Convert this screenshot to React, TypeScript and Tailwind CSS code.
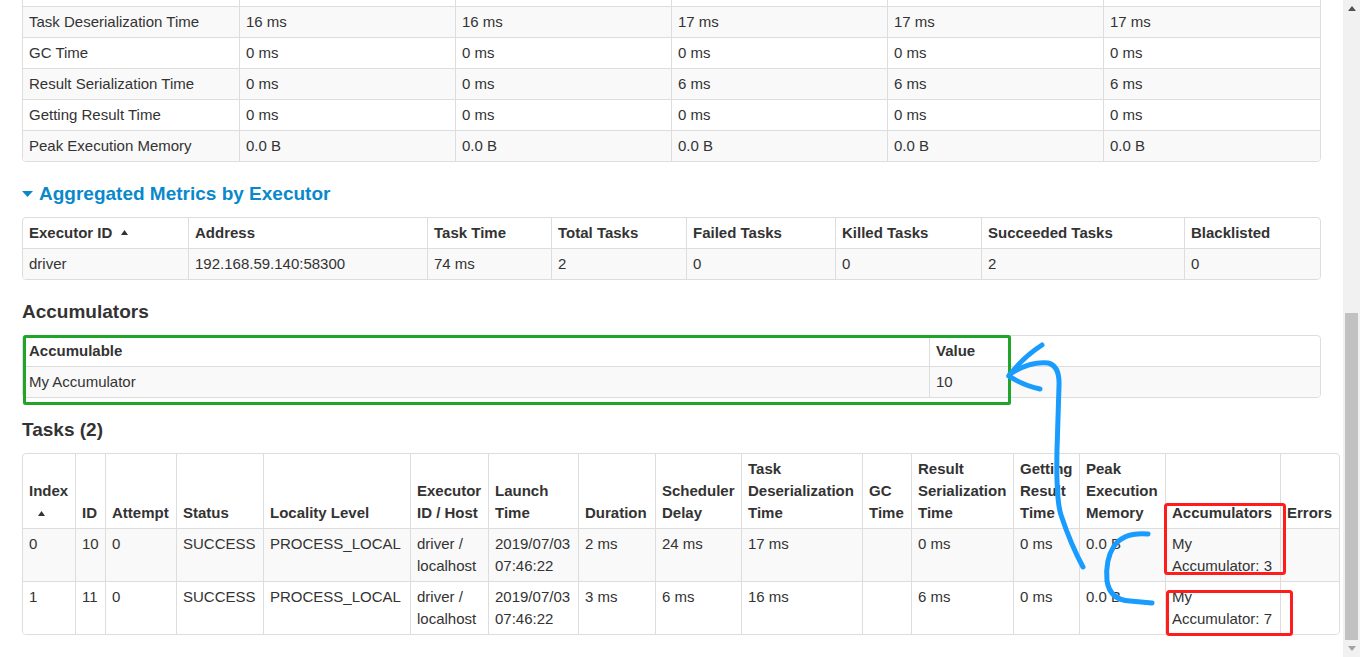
import React from 'react';

const summaryRows = [
  { name: '', vals: ['', '', '', '', ''], striped: false },
  { name: 'Task Deserialization Time', vals: ['16 ms', '16 ms', '17 ms', '17 ms', '17 ms'], striped: true },
  { name: 'GC Time', vals: ['0 ms', '0 ms', '0 ms', '0 ms', '0 ms'], striped: false },
  { name: 'Result Serialization Time', vals: ['0 ms', '0 ms', '6 ms', '6 ms', '6 ms'], striped: true },
  { name: 'Getting Result Time', vals: ['0 ms', '0 ms', '0 ms', '0 ms', '0 ms'], striped: false },
  { name: 'Peak Execution Memory', vals: ['0.0 B', '0.0 B', '0.0 B', '0.0 B', '0.0 B'], striped: true },
];

const execCols = [
  { label: 'Executor ID', w: 'w-[165px]', sort: true },
  { label: 'Address', w: 'w-[239px]' },
  { label: 'Task Time', w: 'w-[124px]' },
  { label: 'Total Tasks', w: 'w-[135px]' },
  { label: 'Failed Tasks', w: 'w-[149px]' },
  { label: 'Killed Tasks', w: 'w-[146px]' },
  { label: 'Succeeded Tasks', w: 'w-[203px]' },
  { label: 'Blacklisted', w: 'w-[136px]' },
];

const taskCols = [
  { lines: ['Index'], w: 'w-[52px]', sort: true },
  { lines: ['ID'], w: 'w-[30px]' },
  { lines: ['Attempt'], w: 'w-[71px]' },
  { lines: ['Status'], w: 'w-[87px]' },
  { lines: ['Locality Level'], w: 'w-[147px]' },
  { lines: ['Executor', 'ID / Host'], w: 'w-[78px]' },
  { lines: ['Launch', 'Time'], w: 'w-[90px]' },
  { lines: ['Duration'], w: 'w-[77px]' },
  { lines: ['Scheduler', 'Delay'], w: 'w-[86px]' },
  { lines: ['Task', 'Deserialization', 'Time'], w: 'w-[121px]' },
  { lines: ['GC', 'Time'], w: 'w-[49px]' },
  { lines: ['Result', 'Serialization', 'Time'], w: 'w-[102px]' },
  { lines: ['Getting', 'Result', 'Time'], w: 'w-[66px]' },
  { lines: ['Peak', 'Execution', 'Memory'], w: 'w-[86px]' },
  { lines: ['Accumulators'], w: 'w-[115px]' },
  { lines: ['Errors'], w: 'w-[59px]' },
];

const taskRows = [
  { striped: true, cells: [['0'], ['10'], ['0'], ['SUCCESS'], ['PROCESS_LOCAL'], ['driver /', 'localhost'], ['2019/07/03', '07:46:22'], ['2 ms'], ['24 ms'], ['17 ms'], [], ['0 ms'], ['0 ms'], ['0.0 B'], ['My', 'Accumulator: 3'], []] },
  { striped: false, cells: [['1'], ['11'], ['0'], ['SUCCESS'], ['PROCESS_LOCAL'], ['driver /', 'localhost'], ['2019/07/03', '07:46:22'], ['3 ms'], ['6 ms'], ['16 ms'], [], ['6 ms'], ['0 ms'], ['0.0 B'], ['My', 'Accumulator: 7'], []] },
];

const cell = 'border-l border-[#ddd] first:border-l-0 px-[6px] py-[4px] text-left';

const SortUp = () => (
  <svg width="7" height="5" viewBox="0 0 7 5" className="inline-block align-middle">
    <path d="M0 5 L3.5 0 L7 5 Z" fill="#333" />
  </svg>
);

const Heading: React.FC<{ children: React.ReactNode; blue?: boolean }> = ({ children, blue }) => (
  <h4 className={`mt-[21px] mb-[12px] h-[22px] leading-[22px] text-[19px] font-bold flex items-center ${blue ? 'text-[#0a88cc]' : 'text-[#333]'}`}>
    {blue && (
      <svg width="11" height="6" viewBox="0 0 11 6" className="mr-[6px]">
        <path d="M0 0 L11 0 L5.5 6 Z" fill="#0a88cc" />
      </svg>
    )}
    {children}
  </h4>
);

function Scrollbar() {
  return (
    <div className="w-[17px] h-full bg-[#f1f1f1] flex flex-col shrink-0">
      <div className="h-[17px] flex items-center justify-center">
        <svg width="8" height="5" viewBox="0 0 8 5"><path d="M0 5 L4 0 L8 5 Z" fill="#505050" /></svg>
      </div>
      <div className="flex-1 px-[2px]">
        <div className="mt-[296px] h-[327px] bg-[#c1c1c1]" />
      </div>
      <div className="h-[17px] flex items-center justify-center">
        <svg width="8" height="5" viewBox="0 0 8 5"><path d="M0 0 L8 0 L4 5 Z" fill="#a3a3a3" /></svg>
      </div>
    </div>
  );
}

export default function App() {
  return (
    <div className="relative w-[1360px] h-[657px] overflow-hidden bg-white flex font-['Liberation_Sans',Arial,sans-serif] text-[15px] leading-[22px] text-[#333]">
      <div className="w-[1343px] h-full overflow-hidden px-[22px]">
        {/* summary metrics, scrolled past its first rows */}
        <div className="-mt-[25px] border border-[#ddd] rounded-[4px] overflow-hidden">
          <table className="w-[1297px] table-fixed border-separate border-spacing-0">
            <tbody>
              {summaryRows.map((r, i) => (
                <tr key={i} className={r.striped ? 'bg-[#f9f9f9]' : 'bg-white'}>
                  <td className={`${cell} w-[216px] h-[30px] ${i > 0 ? 'border-t h-[31px]' : ''}`}>{r.name}</td>
                  {r.vals.map((v, j) => (
                    <td key={j} className={`${cell} ${j === 4 ? 'w-[217px]' : 'w-[216px]'} ${i > 0 ? 'border-t' : ''}`}>{v}</td>
                  ))}
                </tr>
              ))}
            </tbody>
          </table>
        </div>

        <Heading blue>Aggregated Metrics by Executor</Heading>
        <div className="border border-[#ddd] rounded-[4px] overflow-hidden">
          <table className="w-[1297px] table-fixed border-separate border-spacing-0">
            <thead>
              <tr>
                {execCols.map((c) => (
                  <th key={c.label} className={`${cell} ${c.w} font-bold align-bottom whitespace-nowrap`}>
                    {c.label}
                    {c.sort && <span className="ml-[9px] relative -top-[2px]"><SortUp /></span>}
                  </th>
                ))}
              </tr>
            </thead>
            <tbody>
              <tr className="bg-[#f9f9f9]">
                {['driver', '192.168.59.140:58300', '74 ms', '2', '0', '0', '2', '0'].map((v, i) => (
                  <td key={i} className={`${cell} border-t`}>{v}</td>
                ))}
              </tr>
            </tbody>
          </table>
        </div>

        <Heading>Accumulators</Heading>
        <div className="border border-[#ddd] rounded-[4px] overflow-hidden">
          <table className="w-[1297px] table-fixed border-separate border-spacing-0">
            <thead>
              <tr>
                <th className={`${cell} w-[906px] font-bold`}>Accumulable</th>
                <th className={`${cell} w-[391px] font-bold`}>Value</th>
              </tr>
            </thead>
            <tbody>
              <tr className="bg-[#f9f9f9]">
                <td className={`${cell} border-t`}>My Accumulator</td>
                <td className={`${cell} border-t`}>10</td>
              </tr>
            </tbody>
          </table>
        </div>

        <Heading>Tasks (2)</Heading>
        <div className="w-[1318px] border border-[#ddd] rounded-[4px] overflow-hidden">
          <table className="w-[1316px] table-fixed border-separate border-spacing-0">
            <thead>
              <tr>
                {taskCols.map((c, i) => (
                  <th key={i} className={`${cell} ${c.w} font-bold align-bottom whitespace-nowrap`}>
                    {c.lines.map((l, k) => (
                      <div key={k}>{l}</div>
                    ))}
                    {c.sort && (
                      <div className="pl-[9px] h-[22px] flex items-center">
                        <SortUp />
                      </div>
                    )}
                  </th>
                ))}
              </tr>
            </thead>
            <tbody>
              {taskRows.map((r, i) => (
                <tr key={i} className={r.striped ? 'bg-[#f9f9f9]' : 'bg-white'}>
                  {r.cells.map((lines, j) => (
                    <td key={j} className={`${cell} border-t align-top whitespace-nowrap h-[53px]`}>
                      {lines.map((l, k) => (
                        <div key={k}>{l}</div>
                      ))}
                    </td>
                  ))}
                </tr>
              ))}
            </tbody>
          </table>
        </div>
      </div>
      <Scrollbar />

      {/* hand-drawn annotations */}
      <svg className="absolute inset-0 pointer-events-none" width="1360" height="657" viewBox="0 0 1360 657">
        <rect x="24.5" y="336.5" width="985" height="67" fill="none" stroke="#20a52a" strokeWidth="3" rx="1" />
        <rect x="1165.5" y="504.5" width="119" height="69" fill="none" stroke="#ff1c1c" strokeWidth="3" rx="2" />
        <rect x="1167.5" y="591.5" width="124" height="43" fill="none" stroke="#ff1c1c" strokeWidth="3" rx="2" />
        <g fill="none" stroke="#1a9cff" strokeWidth="5" strokeLinecap="round" strokeLinejoin="round">
          <path d="M1042 345 Q1022 358 1009 376" />
          <path d="M1009 376 Q1022 385 1040 389" />
          <path d="M1010 374 Q1030 361 1048 363 Q1060 366 1059 386 L1057 450 Q1056 500 1061 515 Q1071 545 1083 567" />
          <path d="M1148 534 Q1124 532 1114 546 Q1105 560 1107 581 Q1110 600 1130 601 L1152 603" />
        </g>
      </svg>
    </div>
  );
}
